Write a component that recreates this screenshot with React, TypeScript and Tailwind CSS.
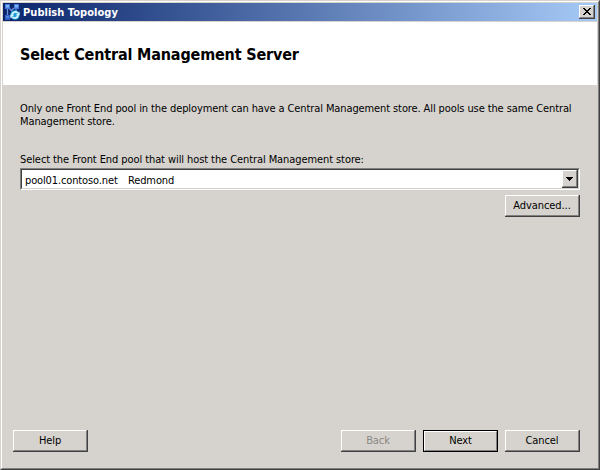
import type { ReactNode } from "react";

const FONT = "font-['DejaVu_Sans_Condensed','DejaVu_Sans',sans-serif] font-stretch-condensed";

function Button({ children, kind = "normal" }: { children: ReactNode; kind?: "normal" | "default" | "disabled" }) {
  const face =
    "flex h-full w-full items-center justify-center border border-t-white border-l-white border-r-[#808080] border-b-[#808080] bg-[#d6d3ce] pb-px";
  const outer =
    kind === "default"
      ? "border border-black"
      : "border-r border-b border-[#404040]";
  return (
    <button
      type="button"
      className={`h-[22px] w-[75px] shrink-0 tracking-[-0.08px] ${outer} ${kind === "disabled" ? "text-[#8a8884]" : "text-black"}`}
    >
      <span className={face}>{children}</span>
    </button>
  );
}

function TopologyIcon() {
  return (
    <svg width="16" height="16" viewBox="0 0 16 16" className="shrink-0">
      <path d="M2.5 4v7M11 4v4M4 4l4 4M9 4L7 6" stroke="#6f94dc" strokeWidth="1.3" />
      <rect x="0" y="0" width="5" height="5" fill="#3f77dc" />
      <rect x="1" y="1" width="3" height="2.5" fill="#82b1f6" />
      <rect x="9" y="0" width="5" height="5" fill="#3f77dc" />
      <rect x="10" y="1" width="3" height="2.5" fill="#82b1f6" />
      <rect x="0" y="11" width="5" height="5" fill="#2f5fc0" />
      <rect x="1" y="12" width="3" height="2" fill="#4c82dc" />
      <circle cx="10" cy="11" r="4.8" fill="#1f9cdc" />
      <path d="M7 10.8C7.4 7.6 11 7.2 12.6 9M13 11.2C12.6 14.4 9 14.8 7.4 13" fill="none" stroke="#d4f6ff" strokeWidth="1.8" />
      <path d="M14.6 7.4v3.8h-3.8zM5.4 14.6v-3.8h3.8z" fill="#d4f6ff" />
    </svg>
  );
}

export default function App() {
  return (
    <div className={`h-[470px] w-[600px] border border-t-[#d6d3ce] border-l-[#d6d3ce] border-r-[#404040] border-b-[#404040] ${FONT} text-[11px] leading-[13px] text-black`}>
      <div className="flex h-full flex-col border border-t-white border-l-white border-r-[#808080] border-b-[#808080] bg-[#d6d3ce] p-px">
        <header className="flex h-[18px] shrink-0 items-center bg-linear-to-r/srgb from-[#0a246a] to-[#a6caf7] pr-[2px] pl-[2px]">
          <TopologyIcon />
          <h1 className="ml-[2px] text-[11px] font-bold tracking-[0.04px] whitespace-nowrap text-white">Publish Topology</h1>
          <button type="button" aria-label="Close" className="ml-auto h-[14px] w-4 border-r border-b border-[#404040]">
            <span className="flex h-full w-full items-center justify-center border border-t-white border-l-white border-r-[#808080] border-b-[#808080] bg-[#d6d3ce]">
              <svg width="8" height="7" viewBox="0 0 8 7" shapeRendering="crispEdges">
                <path d="M0 0h2v1h1v1h2v-1h1v-1h2v1h-1v1h-1v1h-1v1h1v1h1v1h1v1h-2v-1h-1v-1h-2v1h-1v1h-2v-1h1v-1h1v-1h1v-1h-1v-1h-1v-1h-1z" />
              </svg>
            </span>
          </button>
        </header>
        <div className="h-16 shrink-0 border-t border-[#d6d3ce] bg-white pt-[23px] pl-[17px]">
          <h2 className="text-[16px] leading-5 font-bold tracking-[-0.16px] whitespace-nowrap">Select Central Management Server</h2>
        </div>
        <main className="flex flex-1 flex-col pt-[17px] pr-[17px] pl-[17px]">
          <p className="tracking-[-0.105px] whitespace-nowrap">
            <span>Only one Front End pool in the deployment can have a Central Management store. All pools use the same Central</span>
            <br />
            <span>Management store.</span>
          </p>
          <label className="mt-[25px] tracking-[-0.085px] whitespace-nowrap"><span>Select the Front End pool that will host the Central Management store:</span></label>
          <div className="mt-[2px] h-[22px] w-[560px] border border-t-[#808080] border-l-[#808080] border-r-white border-b-white">
            <div className="flex h-full border border-t-[#404040] border-l-[#404040] border-r-[#d6d3ce] border-b-[#d6d3ce] bg-white">
              <div className="flex flex-1 items-center pt-[2px] pl-[3px] tracking-[-0.13px] whitespace-nowrap">
                <span className="w-[103px]">pool01.contoso.net</span>
                <span>Redmond</span>
              </div>
              <div className="w-4 border-r border-b border-[#404040]">
                <div className="flex h-full items-center justify-center border border-t-white border-l-white border-r-[#808080] border-b-[#808080] bg-[#d6d3ce]">
                  <svg width="7" height="4" viewBox="0 0 7 4" shapeRendering="crispEdges">
                    <path d="M0 0h7v1h-1v1h-1v1h-1v1h-1v-1h-1v-1h-1v-1h-1z" />
                  </svg>
                </div>
              </div>
            </div>
          </div>
          <div className="mt-[5px] flex justify-end">
            <Button>Advanced...</Button>
          </div>
        </main>
        <footer className="flex h-[37px] shrink-0 items-start pr-[17px] pl-[10px]">
          <Button>Help</Button>
          <div className="ml-auto flex gap-[7px]">
            <Button kind="disabled">Back</Button>
            <Button kind="default">Next</Button>
            <Button>Cancel</Button>
          </div>
        </footer>
      </div>
    </div>
  );
}
